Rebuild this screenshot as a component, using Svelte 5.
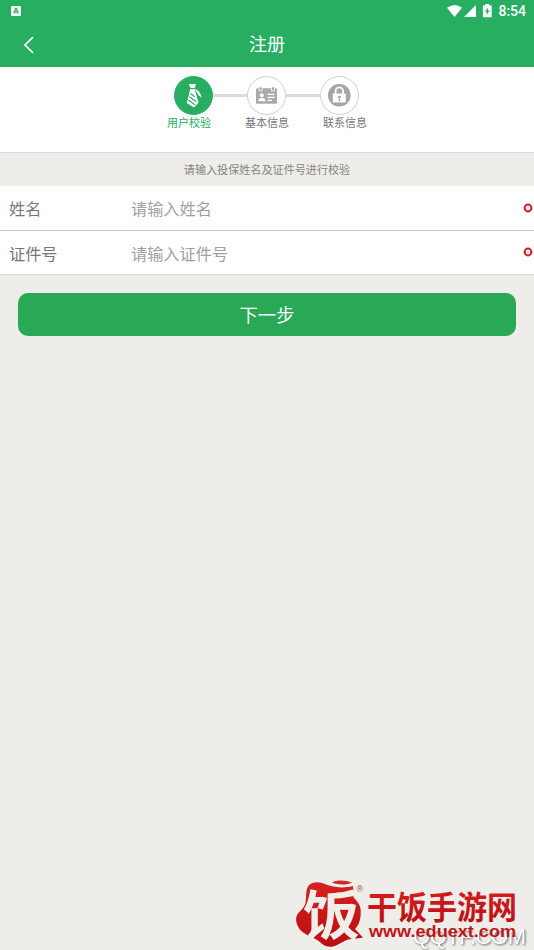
<script>
  let name = $state("");
  let idNumber = $state("");

  const steps = [
    { key: "user", label: "用户校验", active: true },
    { key: "basic", label: "基本信息", active: false },
    { key: "contact", label: "联系信息", active: false },
  ];
</script>

<div class="page">
  <header>
    <div class="status">
      <svg class="app-badge" width="10" height="10" viewBox="0 0 10 10">
        <rect width="10" height="10" rx="1" fill="#f4fff8" />
        <path d="M2.8 7.5 4.6 2.6h.8l1.8 4.9M3.6 5.8h2.8" fill="none" stroke="#27ae60" stroke-width="1.2" />
      </svg>
      <svg class="signals" width="46" height="15" viewBox="0 0 46 15" fill="#fff">
        <path d="M0 3.8Q7.5-1.8 15 3.8L7.5 13Z" />
        <path d="M29 1v12H17Z" />
        <path fill-rule="evenodd" d="M38.2 0h4v1.5h2.5v11.8h-8.8V1.5h2.3ZM41.3 3.2l-3.2 4.6h1.7l-.5 3.4 3.3-4.8h-1.8Z" />
      </svg>
      <span class="clock">8:54</span>
    </div>
    <div class="titlebar">
      <button class="back" aria-label="返回">
        <svg width="12" height="18" viewBox="0 0 12 18">
          <path d="M10 1.2 2 9l8 7.8" fill="none" stroke="#fff" stroke-width="1.7" />
        </svg>
      </button>
      <h1>注册</h1>
    </div>
  </header>

  <section class="steps">
    <div class="circles">
      {#each steps as step, i}
        {#if i > 0}<i class="link"></i>{/if}
        <div class="circle" class:active={step.active}>
          {#if step.key === "user"}
            <svg width="39" height="39" viewBox="0 0 39 39">
              <path d="M15 8h7l-1.3 4h-4.4ZM16.2 13h4.6L24.5 26.5 20 31.5 12.8 27Z" fill="#fff" />
              <path d="m16.5 17.5 4.2 3.2M15.4 20.7l6.8 5M14.4 24l6.4 4.8" stroke="#27ae60" stroke-width="1.1" />
              <path d="M20.8 12.8c3.5 1.4 5.6 4 7 8.6l-3-1.8Z" fill="#fff" />
            </svg>
          {:else if step.key === "basic"}
            <svg width="39" height="39" viewBox="0 0 39 39">
              <rect x="9" y="12.3" width="21" height="15.5" rx="1" fill="#aaa" />
              <path d="M12 10.8h3v4h-3ZM24.5 10.8h3v4h-3Z" fill="#aaa" stroke="#fff" stroke-width=".8" />
              <circle cx="14.8" cy="19.3" r="2" fill="#fff" />
              <path d="M11.1 25.3c0-4.6 7.4-4.6 7.4 0Z" fill="#fff" />
              <path d="M20.5 18.3h7M20.5 21.3h7M20.5 24.3h4.5" stroke="#fff" stroke-width="1.2" />
            </svg>
          {:else}
            <svg width="39" height="39" viewBox="0 0 39 39">
              <circle cx="19.3" cy="19.3" r="11.3" fill="#a5a5a5" />
              <path d="M15.6 18.5V15a3.7 3.7 0 0 1 7.4 0v3.5" fill="none" stroke="#fff" stroke-width="1.8" />
              <rect x="12.8" y="17.5" width="13" height="9" rx=".8" fill="#fff" />
              <path d="M17.9 20h2.9v1.6l-.7.3v3h-1.3v-3l-.9-.3Z" fill="#aaa" />
            </svg>
          {/if}
        </div>
      {/each}
    </div>
    <div class="labels">
      {#each steps as step}
        <span class:active={step.active}>{step.label}</span>
      {/each}
    </div>
  </section>

  <p class="tip">请输入投保姓名及证件号进行校验</p>

  <form>
    <label class="row">
      <span>姓名</span>
      <input name="name" placeholder="请输入姓名" bind:value={name} />
      {@render required()}
    </label>
    <label class="row">
      <span>证件号</span>
      <input name="idNumber" placeholder="请输入证件号" bind:value={idNumber} />
      {@render required()}
    </label>
    <button class="next" type="button">下一步</button>
  </form>

  <svg class="watermark" width="240" height="74" viewBox="0 0 240 74">
    <defs>
      <linearGradient id="red" x1="0" y1="0" x2="0" y2="1">
        <stop offset="0" stop-color="#d9201f" />
        <stop offset="1" stop-color="#b80f14" />
      </linearGradient>
    </defs>
    <text class="site" x="119" y="68" textLength="113">QQTF.COM</text>
    <path
      d="M12.7 14C14 7 21 4.500 29 7.300c9 4 19 5.500 30 2.700 1 4-.5 8 .5 11.500C63 25 66.500 29 66.700 34c.3 7-.7 14-5.700 19l8 8.500c-6 1.500-12 .5-18 3.200C45 68 41 70.700 36 70.700c-5 0-8-3-11.700-6C17 60 8 58 4.300 51 2 47 1.500 43 2.700 39.700 5 35 10 33 11.500 27c.8-4 .2-8 1.200-13Z"
      fill="url(#red)"
    />
    <path d="M38 6.500c6-3 14-2 20 .2-6 2.300-13 2.500-20-.2Z" fill="#cd2927" />
    <text class="seal" x="9" y="59" textLength="57" lengthAdjust="spacingAndGlyphs">饭</text>
    <text class="reg" x="62.500" y="16">®</text>
    <text class="brand" x="73" y="43" textLength="150" lengthAdjust="spacingAndGlyphs">干饭手游网</text>
    <text class="url" x="75" y="61" textLength="147" lengthAdjust="spacingAndGlyphs">www.eduext.com</text>
  </svg>
</div>

{#snippet required()}
  <svg class="required" width="10" height="10" viewBox="0 0 10 10">
    <circle cx="5" cy="5" r="3.4" fill="#fff" stroke="#c4202b" stroke-width="2" />
    <path d="M5 3.6v2.8M3.800 4.300l2.400 1.400M6.200 4.300 3.800 5.700" stroke="#f0bfc2" stroke-width=".5" />
  </svg>
{/snippet}

<style>
  :global(body) {
    background: #eeede9;
  }
  .page {
    position: relative;
    height: 950px;
    overflow: hidden;
    background: #eeede9;
    font-family: "Noto Sans CJK SC", sans-serif;
  }
  header {
    height: 67px;
    background: #27ae60;
    color: #fff;
  }
  .status {
    display: flex;
    align-items: center;
    height: 22px;
    padding: 0 8px 0 11px;
  }
  .signals {
    margin-left: auto;
  }
  .clock {
    margin-left: 5px;
    font: 500 14px/22px Roboto, sans-serif;
  }
  .titlebar {
    display: grid;
    grid-template-columns: 60px 1fr 60px;
    align-items: center;
    height: 45px;
  }
  .back {
    display: flex;
    padding: 0 0 0 23px;
    border: 0;
    background: none;
  }
  h1 {
    margin: 0;
    padding-bottom: 3px;
    font-size: 18px;
    font-weight: 400;
    line-height: 41px;
    text-align: center;
  }
  .steps {
    box-sizing: border-box;
    height: 86px;
    padding-top: 9px;
    border-bottom: 1px solid #dcdcda;
    background: #fff;
  }
  .circles {
    display: flex;
    align-items: center;
    width: 185px;
    margin: 0 auto 0 174px;
  }
  .circle {
    box-sizing: border-box;
    display: flex;
    align-items: center;
    justify-content: center;
    width: 39px;
    height: 39px;
    border: 1px solid #d0d0d0;
    border-radius: 50%;
  }
  .circle svg {
    flex: none;
  }
  .circle.active {
    border-color: #27ae60;
    background: #27ae60;
  }
  .link {
    flex: 1;
    height: 3px;
    background: #dcdcdc;
  }
  .labels {
    display: flex;
    justify-content: space-between;
    width: 200px;
    margin: -1px auto 0;
    color: #777;
    font-size: 11px;
    line-height: 16px;
  }
  .labels .active {
    color: #27ae60;
  }
  .tip {
    margin: 0;
    color: #85857f;
    font-size: 11.1px;
    line-height: 33px;
    text-align: center;
  }
  .row {
    box-sizing: border-box;
    display: flex;
    align-items: center;
    height: 45px;
    padding: 0 1px 0 9px;
    border-bottom: 1px solid #c9c9c9;
    background: #fff;
    color: #777;
    font-size: 16.2px;
  }
  .row span {
    width: 122px;
  }
  .row input {
    flex: 1;
    min-width: 0;
    padding: 0;
    border: 0;
    outline: none;
    background: none;
    color: #555;
    font: inherit;
  }
  .row input::placeholder {
    color: #a0a0a0;
    opacity: 1;
  }
  .required {
    margin-bottom: 1px;
  }
  .row + .row {
    height: 44px;
    border-color: #dcdcda;
  }
  .next {
    display: block;
    width: calc(100% - 36px);
    height: 43px;
    margin: 18px auto 0;
    padding: 0 0 1px;
    border: 0;
    border-radius: 10px;
    background: #29a956;
    color: #fff;
    font: inherit;
    font-size: 18.3px;
  }
  .watermark {
    position: absolute;
    right: 0;
    bottom: 0;
    font-family: "Noto Sans CJK SC", sans-serif;
  }
  .site {
    fill: #fff;
    font: 22px "Liberation Sans", sans-serif;
    filter: drop-shadow(1px 1px 1px #666);
  }
  .seal {
    fill: #efeee9;
    font-size: 53px;
    font-weight: 700;
  }
  .reg {
    fill: #b8474a;
    font: 9px "Liberation Sans", sans-serif;
  }
  .brand {
    fill: url(#red);
    font-size: 32px;
    font-weight: 700;
  }
  .url {
    fill: #c01619;
    font: bold 17px "Liberation Sans", sans-serif;
  }
</style>
